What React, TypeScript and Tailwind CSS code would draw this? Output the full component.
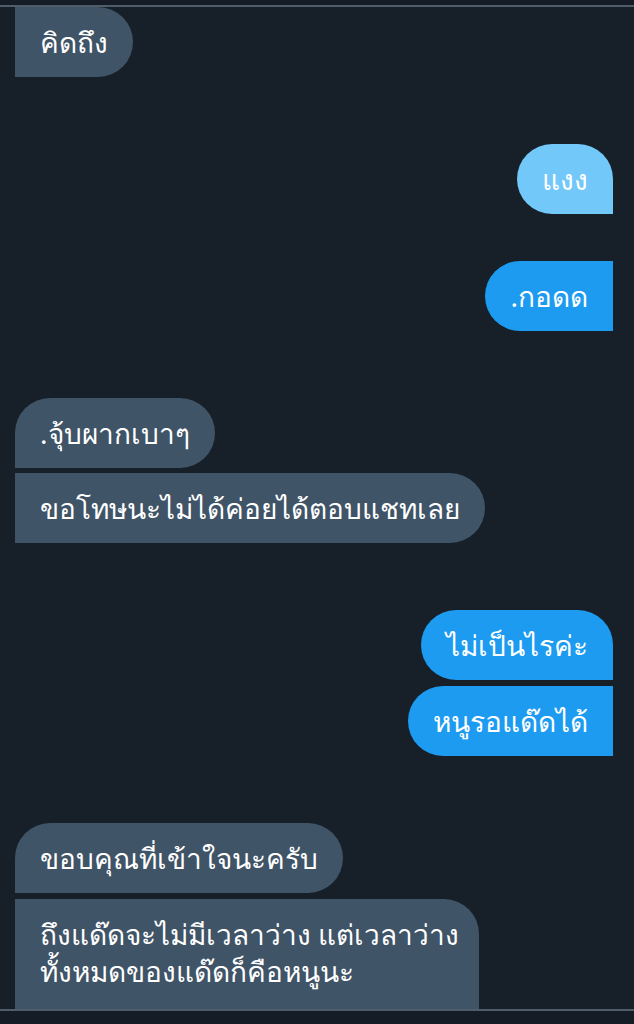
import React from 'react';

type Msg = { text: string[]; side: 'in' | 'out'; cls: string; mt: string; pad?: string };

const messages: Msg[] = [
  { text: ['คิดถึง'], side: 'in', cls: 'rounded-r-[35px] bg-[#3f5467]', mt: 'mt-0' },
  { text: ['แงง'], side: 'out', cls: 'rounded-l-[35px] rounded-tr-[35px] bg-[#72c8f8]', mt: 'mt-[67px]' },
  { text: ['.กอดด'], side: 'out', cls: 'rounded-l-[35px] bg-[#1d9bf0]', mt: 'mt-[47px]' },
  { text: ['.จุ้บผากเบาๆ'], side: 'in', cls: 'rounded-r-[35px] rounded-tl-[35px] bg-[#3f5467]', mt: 'mt-[67px]' },
  { text: ['ขอโทษนะไม่ได้ค่อยได้ตอบแชทเลย'], side: 'in', cls: 'rounded-r-[35px] bg-[#3f5467]', mt: 'mt-[5px]' },
  { text: ['ไม่เป็นไรค่ะ'], side: 'out', cls: 'rounded-l-[35px] rounded-tr-[35px] bg-[#1d9bf0]', mt: 'mt-[67px]' },
  { text: ['หนูรอแด๊ดได้'], side: 'out', cls: 'rounded-l-[35px] bg-[#1d9bf0]', mt: 'mt-[6px]' },
  { text: ['ขอบคุณที่เข้าใจนะครับ'], side: 'in', cls: 'rounded-r-[35px] rounded-tl-[35px] bg-[#3f5467]', mt: 'mt-[67px]' },
  {
    text: ['ถึงแด๊ดจะไม่มีเวลาว่าง แต่เวลาว่าง', 'ทั้งหมดของแด๊ดก็คือหนูนะ'],
    side: 'in',
    cls: 'rounded-tr-[35px] bg-[#3f5467] pr-[20px]',
    mt: 'mt-[6px]',
    pad: 'pt-[17px] pb-[30px] leading-[37px]',
  },
];

export default function App() {
  return (
    <div className="w-[634px] h-[1024px] overflow-hidden bg-[#172029] flex flex-col" style={{ fontFamily: '"Noto Sans", "Liberation Sans", sans-serif' }}>
      <div className="h-[5px] shrink-0 bg-[#151c25]" />
      <div className="h-[2px] shrink-0 bg-[#4f5c69]" />
      <div className="h-[1002px] shrink-0 overflow-hidden flex flex-col px-[15px] pr-[21px]">
        {messages.map((m, i) => (
          <div key={i} className={`flex ${m.side === 'in' ? 'justify-start' : 'justify-end'} ${m.mt}`}>
            <div className={`${m.cls} pl-[25px] ${m.cls.includes('pr-') ? '' : 'pr-[25px]'} ${m.pad ?? 'py-[17px] leading-[36px]'} text-white text-[28px] whitespace-nowrap`}>
              {m.text.map((t, j) => (
                <div key={j}>{t}</div>
              ))}
            </div>
          </div>
        ))}
      </div>
      <div className="h-[2px] shrink-0 bg-[#4f5c69]" />
      <div className="flex-1 bg-[#151c25]" />
    </div>
  );
}
